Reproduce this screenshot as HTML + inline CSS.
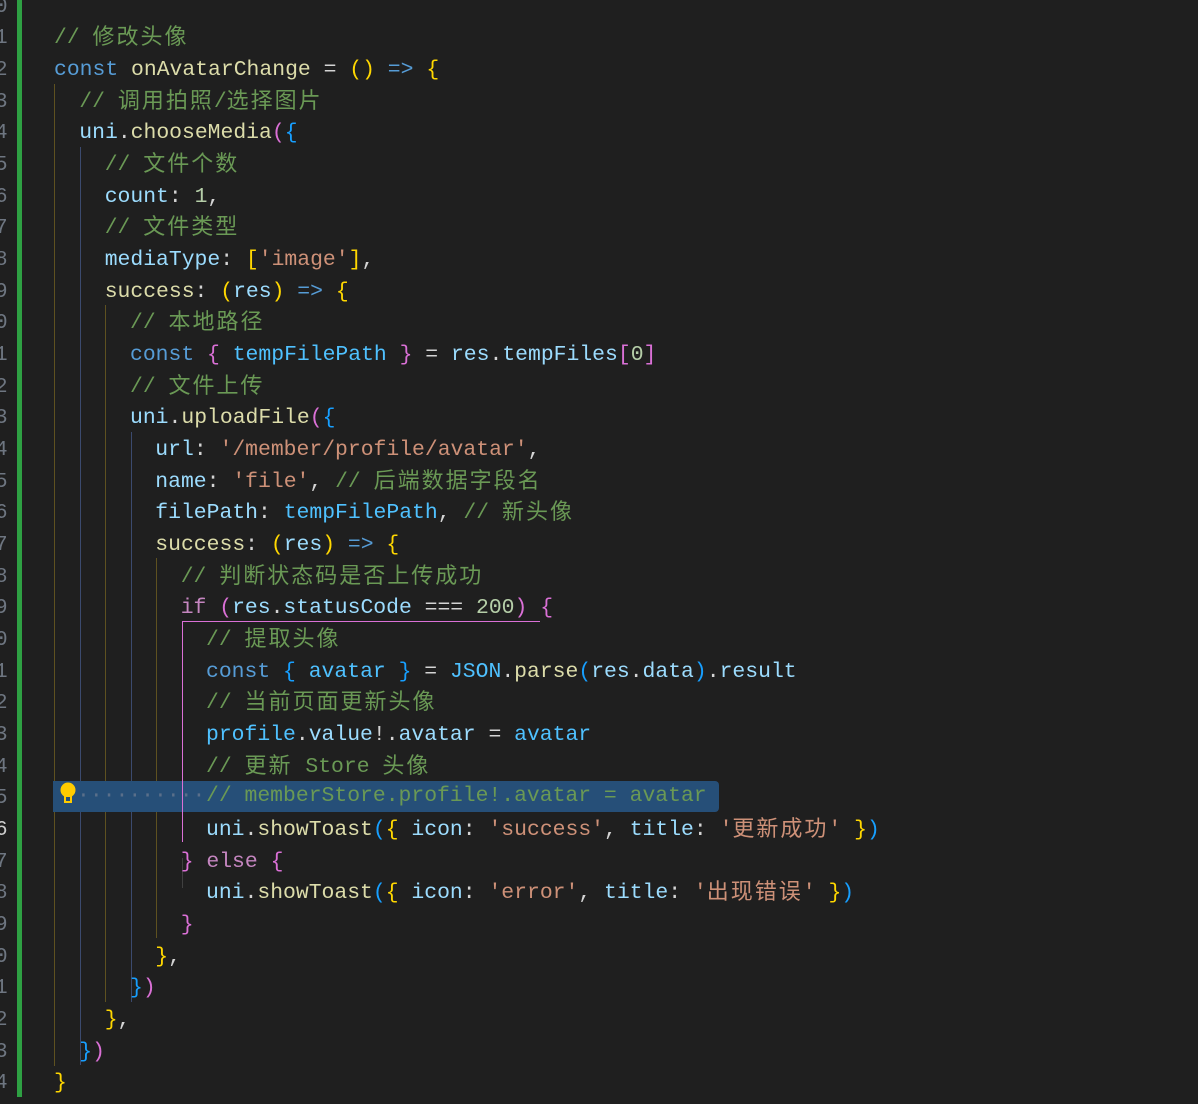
<!DOCTYPE html>
<html><head><meta charset="utf-8"><style>
html,body{margin:0;padding:0;background:#1f1f1f;width:1198px;height:1104px;overflow:hidden;position:relative}
.l{position:absolute;height:31.67px;line-height:31.67px;padding-top:3px;white-space:pre;font-family:"Liberation Mono","Noto Sans CJK SC",monospace;font-size:21.4px;color:#d4d4d4}
.n{position:absolute;left:-5px;width:14px;height:31.67px;line-height:31.67px;padding-top:3px;font-family:"Liberation Mono",monospace;font-size:21px;color:#6e7681}
.g{position:absolute;width:1px}
.y{background:#5e5120}.b{background:#3b4a6e}
.c{color:#6a9955}.k{color:#569cd6}.v{color:#9cdcfe}.w{color:#4fc1ff}.f{color:#dcdcaa}.s{color:#ce9178}.u{color:#b5cea8}.p{color:#c586c0}
.B1{color:#ffd700}.B2{color:#da70d6}.B3{color:#179fff}
.h{letter-spacing:2px;line-height:0;font-size:22px;font-family:"Noto Sans CJK SC","Liberation Mono",sans-serif;position:relative;top:1px}
</style></head><body>
<div style="position:absolute;left:17px;top:0;width:5px;height:1097px;background:#2ea043"></div>
<div class="g y" style="left:54px;top:83.5px;height:982px"></div>
<div class="g b" style="left:80px;top:146.9px;height:918px"></div>
<div class="g y" style="left:105px;top:305px;height:697px"></div>
<div class="g b" style="left:131px;top:431.7px;height:570px"></div>
<div class="g y" style="left:156px;top:558.4px;height:380px"></div>
<div class="g" style="left:182px;top:858px;height:30px;background:#404040"></div>
<div style="position:absolute;left:53px;top:780.5px;width:666px;height:31px;background:#264f78;border-radius:0 4px 4px 0"></div>
<div class="g" style="left:182px;top:621px;height:221px;background:#da70d6"></div>
<div style="position:absolute;left:182px;top:620.5px;width:358px;height:1px;background:#da70d6"></div>
<svg style="position:absolute;left:57px;top:781px" width="22" height="26" viewBox="0 0 22 26"><circle cx="11" cy="9" r="7.5" fill="#ffcc00"/><rect x="7" y="13" width="8" height="9" fill="#ffcc00"/><rect x="9" y="16" width="4" height="4" fill="#264f78"/></svg>
<div class="l" style="left:77px;top:778.2px;color:#5a6f8a">··········</div>

<div class="n" style="top:-11.5px">0</div>
<div class="n" style="top:20.2px">1</div><div class="n" style="top:51.9px">2</div><div class="n" style="top:83.5px">3</div><div class="n" style="top:115.2px">4</div><div class="n" style="top:146.9px">5</div><div class="n" style="top:178.5px">6</div><div class="n" style="top:210.2px">7</div><div class="n" style="top:241.9px">8</div><div class="n" style="top:273.5px">9</div><div class="n" style="top:305.2px">0</div><div class="n" style="top:336.9px">1</div><div class="n" style="top:368.5px">2</div><div class="n" style="top:400.2px">3</div><div class="n" style="top:431.9px">4</div><div class="n" style="top:463.5px">5</div><div class="n" style="top:495.2px">6</div><div class="n" style="top:526.9px">7</div><div class="n" style="top:558.5px">8</div><div class="n" style="top:590.2px">9</div><div class="n" style="top:621.9px">0</div><div class="n" style="top:653.5px">1</div><div class="n" style="top:685.2px">2</div><div class="n" style="top:716.9px">3</div><div class="n" style="top:748.5px">4</div><div class="n" style="top:780.2px">5</div><div class="n" style="top:811.9px;color:#cccccc">6</div><div class="n" style="top:843.5px">7</div><div class="n" style="top:875.2px">8</div><div class="n" style="top:906.9px">9</div><div class="n" style="top:938.5px">0</div><div class="n" style="top:970.2px">1</div><div class="n" style="top:1001.9px">2</div><div class="n" style="top:1033.5px">3</div><div class="n" style="top:1065.2px">4</div>

<div class="l" style="left:54px;top:20.2px"><span class="c">// <span class="h">修改头像</span></span></div>
<div class="l" style="left:54px;top:51.9px"><span class="k">const</span> <span class="f">onAvatarChange</span> = <span class="B1">()</span> <span class="k">=&gt;</span> <span class="B1">{</span></div>
<div class="l" style="left:79.3px;top:83.5px"><span class="c">// <span class="h">调用拍照</span>/<span class="h">选择图片</span></span></div>
<div class="l" style="left:79.3px;top:115.2px"><span class="v">uni</span>.<span class="f">chooseMedia</span><span class="B2">(</span><span class="B3">{</span></div>
<div class="l" style="left:104.7px;top:146.9px"><span class="c">// <span class="h">文件个数</span></span></div>
<div class="l" style="left:104.7px;top:178.5px"><span class="v">count</span>: <span class="u">1</span>,</div>
<div class="l" style="left:104.7px;top:210.2px"><span class="c">// <span class="h">文件类型</span></span></div>
<div class="l" style="left:104.7px;top:241.9px"><span class="v">mediaType</span>: <span class="B1">[</span><span class="s">'image'</span><span class="B1">]</span>,</div>
<div class="l" style="left:104.7px;top:273.5px"><span class="f">success</span>: <span class="B1">(</span><span class="v">res</span><span class="B1">)</span> <span class="k">=&gt;</span> <span class="B1">{</span></div>
<div class="l" style="left:130px;top:305.2px"><span class="c">// <span class="h">本地路径</span></span></div>
<div class="l" style="left:130px;top:336.9px"><span class="k">const</span> <span class="B2">{</span> <span class="w">tempFilePath</span> <span class="B2">}</span> = <span class="v">res</span>.<span class="v">tempFiles</span><span class="B2">[</span><span class="u">0</span><span class="B2">]</span></div>
<div class="l" style="left:130px;top:368.5px"><span class="c">// <span class="h">文件上传</span></span></div>
<div class="l" style="left:130px;top:400.2px"><span class="v">uni</span>.<span class="f">uploadFile</span><span class="B2">(</span><span class="B3">{</span></div>
<div class="l" style="left:155.3px;top:431.9px"><span class="v">url</span>: <span class="s">'/member/profile/avatar'</span>,</div>
<div class="l" style="left:155.3px;top:463.5px"><span class="v">name</span>: <span class="s">'file'</span>, <span class="c">// <span class="h">后端数据字段名</span></span></div>
<div class="l" style="left:155.3px;top:495.2px"><span class="v">filePath</span>: <span class="w">tempFilePath</span>, <span class="c">// <span class="h">新头像</span></span></div>
<div class="l" style="left:155.3px;top:526.9px"><span class="f">success</span>: <span class="B1">(</span><span class="v">res</span><span class="B1">)</span> <span class="k">=&gt;</span> <span class="B1">{</span></div>
<div class="l" style="left:180.7px;top:558.5px"><span class="c">// <span class="h">判断状态码是否上传成功</span></span></div>
<div class="l" style="left:180.7px;top:590.2px"><span class="p">if</span> <span class="B2">(</span><span class="v">res</span>.<span class="v">statusCode</span> === <span class="u">200</span><span class="B2">)</span> <span class="B2">{</span></div>
<div class="l" style="left:206px;top:621.9px"><span class="c">// <span class="h">提取头像</span></span></div>
<div class="l" style="left:206px;top:653.5px"><span class="k">const</span> <span class="B3">{</span> <span class="w">avatar</span> <span class="B3">}</span> = <span class="w">JSON</span>.<span class="f">parse</span><span class="B3">(</span><span class="v">res</span>.<span class="v">data</span><span class="B3">)</span>.<span class="v">result</span></div>
<div class="l" style="left:206px;top:685.2px"><span class="c">// <span class="h">当前页面更新头像</span></span></div>
<div class="l" style="left:206px;top:716.9px"><span class="w">profile</span>.<span class="v">value</span>!.<span class="v">avatar</span> = <span class="w">avatar</span></div>
<div class="l" style="left:206px;top:748.5px"><span class="c">// <span class="h">更新</span> Store <span class="h">头像</span></span></div>
<div class="l" style="left:206px;top:778.2px"><span class="c">// memberStore.profile!.avatar = avatar</span></div>
<div class="l" style="left:206px;top:811.9px"><span class="v">uni</span>.<span class="f">showToast</span><span class="B3">(</span><span class="B1">{</span> <span class="v">icon</span>: <span class="s">'success'</span>, <span class="v">title</span>: <span class="s">'<span class="h">更新成功</span>'</span> <span class="B1">}</span><span class="B3">)</span></div>
<div class="l" style="left:180.7px;top:843.5px"><span class="B2">}</span> <span class="p">else</span> <span class="B2">{</span></div>
<div class="l" style="left:206px;top:875.2px"><span class="v">uni</span>.<span class="f">showToast</span><span class="B3">(</span><span class="B1">{</span> <span class="v">icon</span>: <span class="s">'error'</span>, <span class="v">title</span>: <span class="s">'<span class="h">出现错误</span>'</span> <span class="B1">}</span><span class="B3">)</span></div>
<div class="l" style="left:180.7px;top:906.9px"><span class="B2">}</span></div>
<div class="l" style="left:155.3px;top:938.5px"><span class="B1">}</span>,</div>
<div class="l" style="left:130px;top:970.2px"><span class="B3">}</span><span class="B2">)</span></div>
<div class="l" style="left:104.7px;top:1001.9px"><span class="B1">}</span>,</div>
<div class="l" style="left:79.3px;top:1033.5px"><span class="B3">}</span><span class="B2">)</span></div>
<div class="l" style="left:54px;top:1065.2px"><span class="B1">}</span></div>
</body></html>
